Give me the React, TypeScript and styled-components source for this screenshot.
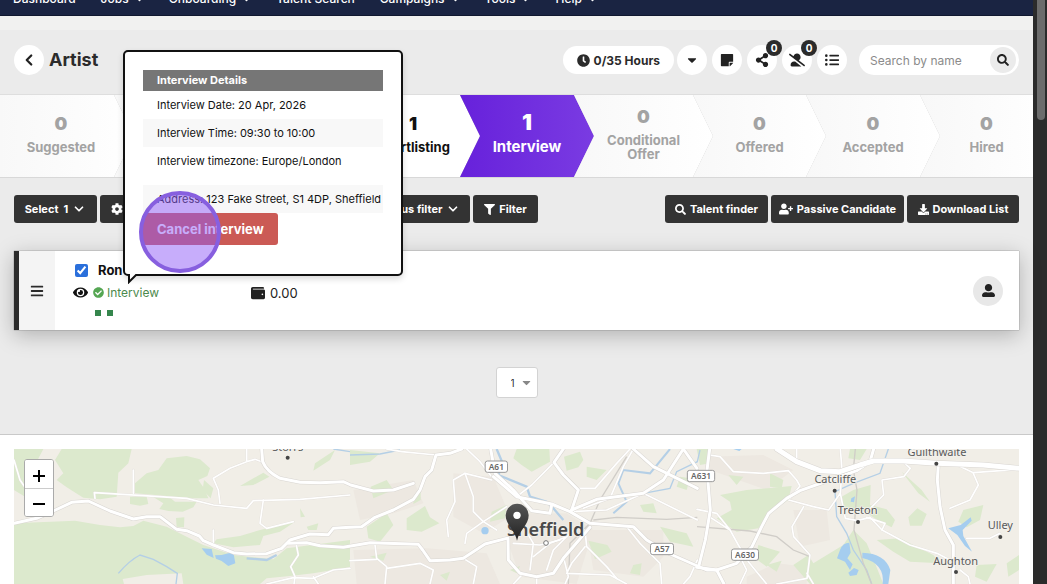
import React from "react";
import styled, { createGlobalStyle, css } from "styled-components";
import { ChevronDown, ChevronLeft } from "lucide-react";
import {
  FaBars,
  FaCaretDown,
  FaCheckCircle,
  FaClock,
  FaCog,
  FaDownload,
  FaEye,
  FaFilter,
  FaListUl,
  FaSearch,
  FaShareAlt,
  FaStickyNote,
  FaUserAlt,
  FaUserAltSlash,
  FaUserPlus,
  FaWallet,
} from "react-icons/fa";

const ink = "#2b2b2b";

const GlobalStyle = createGlobalStyle`
  *, *::before, *::after { box-sizing: border-box; }
  body {
    margin: 0;
    background: #fff;
    color: #111;
    font-family: Inter, "Liberation Sans", sans-serif;
    font-size: 11px;
    overflow: hidden;
  }
  button, input, select { font-family: inherit; }
  ul, ol, h1, h2 { margin: 0; padding: 0; list-style: none; }
`;

const Shell = styled.div`
  display: flex;
  min-height: 100vh;
`;

const Page = styled.div`
  position: relative;
  display: flex;
  flex: 1;
  flex-direction: column;
  min-width: 0;
`;

const ScrollTrack = styled.div`
  width: 14px;
  padding: 0 2px 0 4px;
  background: ${ink};
`;

const ScrollThumb = styled.div`
  height: 120px;
  border-radius: 0 0 4px 4px;
  background: #6c6c6c;
`;

const Nav = styled.nav`
  display: flex;
  align-items: flex-end;
  gap: 25px;
  height: 16px;
  padding: 0 13px 8px;
  overflow: hidden;
  background: #1a2442;
  border-bottom: 1px solid #10182f;
`;

const NavLink = styled.a`
  display: flex;
  align-items: center;
  gap: 6px;
  color: #fff;
  font-size: 12px;
  font-weight: 500;
  line-height: 16px;
  text-decoration: none;
  white-space: nowrap;
`;

const Strip = styled.div`
  height: 14px;
  background: #f1f1f0;
`;

const Grey = styled.div`
  background: #ebebeb;
  border-bottom: 1px solid #c9c9c9;
`;

const Header = styled.header`
  display: flex;
  align-items: center;
  gap: 5px;
  padding: 15px 14px 19px;
`;

const Title = styled.h1`
  flex: 1;
  color: ${ink};
  font-size: 18px;
  font-weight: 700;
  line-height: 30px;
`;

const RoundButton = styled.button`
  position: relative;
  display: grid;
  place-items: center;
  width: 30px;
  height: 30px;
  padding: 0;
  border: 0;
  border-radius: 50%;
  background: #fff;
  color: #222;
  font-size: 14px;
`;

const Badge = styled.span`
  position: absolute;
  top: -5px;
  right: -5px;
  width: 16px;
  border-radius: 8px;
  background: ${ink};
  color: #fff;
  font-size: 10px;
  font-weight: 700;
  line-height: 16px;
  text-align: center;
`;

const Hours = styled.div`
  display: flex;
  align-items: center;
  gap: 4px;
  height: 28px;
  margin-right: -2px;
  padding: 0 14px;
  border-radius: 14px;
  background: #fff;
  color: ${ink};
  font-size: 12px;
  font-weight: 700;
  white-space: nowrap;
`;

const Search = styled.form`
  display: flex;
  align-items: center;
  width: 160px;
  height: 30px;
  margin-left: 7px;
  padding: 0 3px 0 11px;
  border-radius: 15px;
  background: #fff;
`;

const SearchInput = styled.input`
  flex: 1;
  min-width: 0;
  padding: 0;
  border: 0;
  outline: 0;
  background: none;
  font-size: 12px;
  &::placeholder { color: #8b8b8b; }
`;

const SearchButton = styled.button`
  display: grid;
  place-items: center;
  width: 26px;
  height: 26px;
  padding: 0;
  border: 0;
  border-radius: 50%;
  background: #ebebeb;
  color: #222;
  font-size: 12px;
`;

const Pipeline = styled.ol`
  display: grid;
  grid-template-columns: 114fr 118fr 114fr 114fr 114fr 119fr 113fr 114fr 113fr;
  height: 84px;
  overflow: hidden;
  background: #c4c4c4;
  border-top: 1px solid #dedede;
  border-bottom: 1px solid #d8d8d8;
`;

type StageTone = "empty" | "filled" | "active";

const stageTones = {
  empty: css`
    color: #a3a3a3;
    background: linear-gradient(90deg, #f8f8f8, #fff);
  `,
  filled: css`
    color: #111;
    background: #fff;
  `,
  active: css`
    color: #fff;
    background: linear-gradient(90deg, #6721db, #7a3be2);
  `,
};

const Stage = styled.li<{ $tone: StageTone; $first: boolean }>`
  display: flex;
  flex-direction: column;
  align-items: center;
  justify-content: center;
  margin-right: -20px;
  padding: 0 ${(p) => (p.$first ? 32 : 20)}px 10px 20px;
  font-size: ${(p) => (p.$tone === "active" ? 15 : 13)}px;
  font-weight: 700;
  line-height: ${(p) => (p.$tone === "active" ? 18 : 14)}px;
  text-align: center;
  clip-path: polygon(
    0 0,
    calc(100% - 20px) 0,
    100% 50%,
    calc(100% - 20px) 100%,
    0 100%,
    ${(p) => (p.$first ? "0 50%" : "20px 50%")}
  );
  ${(p) => stageTones[p.$tone]}
  & + & { margin-left: ${(p) => (p.$tone === "empty" ? 1 : 0)}px; }
`;

const Count = styled.strong<{ $large: boolean }>`
  font-size: ${(p) => (p.$large ? 22 : 18)}px;
  line-height: 32px;
`;

const Toolbar = styled.div`
  display: flex;
  gap: 3px;
  padding: 17px 14px 28px;
`;

const ToolSpacer = styled.div`
  flex: 1;
`;

const ToolButton = styled.button<{ $width: number; $start?: boolean }>`
  display: flex;
  flex: 0 0 ${(p) => p.$width}px;
  align-items: center;
  justify-content: ${(p) => (p.$start ? "flex-start" : "center")};
  gap: 4px;
  min-width: 0;
  height: 28px;
  padding: 0 ${(p) => (p.$start ? 11 : 4)}px;
  border: 0;
  border-radius: 3px;
  background: #333;
  color: #fff;
  font-size: 11px;
  font-weight: 700;
  white-space: nowrap;
`;

const Card = styled.article`
  display: flex;
  height: 79px;
  margin: 0 14px;
  border-left: 5px solid ${ink};
  background: #fff;
  box-shadow: 0 0 1px rgba(0, 0, 0, 0.6), 0 5px 20px rgba(0, 0, 0, 0.25);
`;

const DragHandle = styled.button`
  display: grid;
  place-items: center;
  width: 36px;
  padding: 0;
  border: 0;
  background: #f4f4f4;
  color: ${ink};
  font-size: 14px;
`;

const Candidate = styled.div`
  display: flex;
  flex-direction: column;
  width: 196px;
  padding: 11px 0 0 18px;
`;

const NameRow = styled.label`
  display: flex;
  align-items: center;
  gap: 10px;
  height: 16px;
  font-size: 13px;
  font-weight: 700;
`;

const Tick = styled.input`
  width: 13px;
  height: 13px;
  margin: 0 0 0 2px;
  accent-color: #2a6fdb;
`;

const StatusRow = styled.div`
  display: flex;
  align-items: center;
  gap: 5px;
  height: 28px;
  color: #111;
  font-size: 15px;
`;

const StatusLink = styled.a`
  display: flex;
  align-items: center;
  gap: 3px;
  color: #4c8a4d;
  font-size: 12px;
  text-decoration: none;
  svg { color: #55a653; font-size: 11px; }
`;

const Marks = styled.div`
  display: flex;
  gap: 6px;
  padding: 4px 0 0 22px;
`;

const Mark = styled.span`
  width: 6px;
  height: 6px;
  background: #35864d;
`;

const Balance = styled.div`
  display: flex;
  flex: 1;
  align-items: center;
  gap: 5px;
  padding-top: 5px;
  color: #222;
  font-size: 13px;
`;

const Avatar = styled.button`
  display: grid;
  place-items: center;
  align-self: center;
  width: 30px;
  height: 30px;
  margin-right: 16px;
  padding: 0;
  border: 0;
  border-radius: 50%;
  background: #e8e8e8;
  color: #222;
  font-size: 13px;
`;

const Pager = styled.div`
  display: flex;
  justify-content: center;
  padding: 37px 0 36px;
`;

const PageSelect = styled.span`
  position: relative;
  svg {
    position: absolute;
    top: 9px;
    right: 5px;
    color: #888;
    font-size: 13px;
    pointer-events: none;
  }
  select {
    width: 42px;
    height: 31px;
    padding: 0 14px;
    appearance: none;
    border: 1px solid #d3d3d3;
    border-radius: 3px;
    background: #fff;
    color: #333;
    font-size: 10px;
  }
`;

const Popover = styled.section`
  position: absolute;
  top: 50px;
  left: 123px;
  width: 280px;
  height: 226px;
  padding: 18px;
  border: 2px solid #111;
  border-radius: 5px;
  background: #fff;
  box-shadow: 0 3px 6px rgba(0, 0, 0, 0.15);
`;

const Tail = styled.svg`
  position: absolute;
  left: 3px;
  bottom: -10px;
`;

const PopTitle = styled.h2`
  padding: 0 14px;
  background: #767676;
  color: #fff;
  font-size: 11px;
  font-weight: 700;
  line-height: 21px;
`;

const Detail = styled.li<{ $shaded?: boolean; $spaced?: boolean }>`
  margin-top: ${(p) => (p.$spaced ? 10 : 0)}px;
  padding: 0 14px;
  background: ${(p) => (p.$shaded ? "#f8f8f8" : "#fff")};
  color: #111;
  font-size: 11px;
  line-height: 28px;
  white-space: nowrap;
`;

const CancelButton = styled.button`
  height: 32px;
  padding: 0 14px;
  border: 0;
  border-radius: 3px;
  background: #cb5a55;
  color: #fff;
  font-size: 13px;
  font-weight: 700;
`;

const ClickHalo = styled.span`
  position: absolute;
  top: 139px;
  left: 14px;
  width: 82px;
  height: 82px;
  border: 4px solid #875fdf;
  border-radius: 50%;
  background: rgba(144, 92, 247, 0.5);
  pointer-events: none;
`;

const MapPanel = styled.section`
  position: relative;
  flex: 1;
  min-height: 135px;
  margin: 14px 14px 0;
  background: #f0ede6;
`;

const MapDrawing = styled.svg`
  position: absolute;
  inset: 0;
  width: 100%;
  height: 100%;
  font-family: "Noto Sans", sans-serif;
`;

const ZoomControl = styled.div`
  position: absolute;
  top: 10px;
  left: 10px;
  display: flex;
  flex-direction: column;
  width: 30px;
  border: 1px solid #aaa;
  border-radius: 3px;
  background: #fff;
  overflow: hidden;
`;

const ZoomButton = styled.button`
  display: grid;
  place-items: center;
  height: 28px;
  padding: 3px 0 0;
  border: 0;
  background: #fff;
  & + & { border-top: 1px solid #ccc; }
`;

const navItems = [
  { label: "Dashboard", menu: false },
  { label: "Jobs", menu: true },
  { label: "Onboarding", menu: true },
  { label: "Talent Search", menu: false },
  { label: "Campaigns", menu: true },
  { label: "Tools", menu: true },
  { label: "Help", menu: true },
];

const stages: { count?: number; label?: string; tone: StageTone }[] = [
  { count: 0, label: "Suggested", tone: "empty" },
  { tone: "empty" },
  { tone: "empty" },
  { count: 1, label: "Shortlisting", tone: "filled" },
  { count: 1, label: "Interview", tone: "active" },
  { count: 0, label: "Conditional Offer", tone: "empty" },
  { count: 0, label: "Offered", tone: "empty" },
  { count: 0, label: "Accepted", tone: "empty" },
  { count: 0, label: "Hired", tone: "empty" },
];

const woods = [
  "M42 57H130L110 95 100 170 75 200 42 180Z",
  "M185 57H395L385 100 355 128 350 200 300 208 250 203 200 172 170 150 190 130 165 90Z",
  "M405 160L440 130 475 120 500 85 560 78 600 88 630 115 622 138 595 150 612 175 625 205 560 205 500 198 405 190Z",
  "M612 150L640 175 632 205 608 180Z",
  "M390 200H440L445 222 420 227 390 222Z",
  "M455 198L510 203 525 215 590 215 580 232 548 245 505 243 478 237 490 220Z",
  "M528 264L553 262 552 292 530 290Z",
  "M42 280L225 272 300 285 360 292 400 288 430 272 500 290 560 320 610 345 700 375 820 388 860 355 1050 330V412L940 430 870 438 800 445 780 462H550L545 430 440 435 368 447 372 462H42Z",
  "M650 328L720 318 780 300 885 275 840 305 790 318 780 345 700 352 640 340Z",
  "M720 168L790 128 808 140 760 165Z M900 235L915 260 902 262Z M945 100L1005 60 990 90 940 122Z M920 290L955 280 950 300 925 300Z",
  "M1050 60L1140 70 1110 95 1050 105Z",
  "M1550 57H1648L1650 95 1595 125 1565 105 1540 85Z",
  "M1692 80L1740 65 1750 90 1735 112 1700 122Z",
  "M1220 265L1275 228 1290 262 1318 280 1265 305 1220 300Z",
  "M1100 290L1160 250 1180 285 1140 335 1105 325Z",
  "M1112 170L1160 150 1180 180 1120 205Z",
  "M1242 200L1262 182 1262 210 1240 222Z M1320 435L1350 425 1340 452Z M1110 380L1160 368 1150 392Z",
  "M1765 332L1822 345 1835 365 1785 388Z",
  "M1760 110L1820 120 1790 150 1760 140Z M1920 225L1960 220 1970 250 1930 245Z M1475 245L1520 225 1515 265 1470 275Z M1980 290L2060 310 2080 350 2010 335Z",
  "M1530 420L1560 408 1550 430Z M1900 405L1925 400 1920 435 1890 430Z M2040 140L2070 145 2060 180 2030 170Z",
  "M2150 265L2195 240 2190 215 2160 195 2240 180 2375 168 2365 210 2306 250 2275 295 2210 305Z",
  "M2090 57L2125 57 2130 100 2100 105Z M2185 135L2230 140 2210 165Z",
  "M2275 345L2340 365 2300 410 2265 385Z M2300 405L2345 392 2330 425Z",
  "M2430 462L2380 405 2425 375 2440 400 2530 345 2560 300 2600 340 2625 400 2650 462Z",
  "M2525 200L2560 180 2612 165 2610 225 2660 238 2685 270 2675 292 2640 275 2590 242 2525 240Z",
  "M2725 262L2752 235 2780 252 2765 287 2730 287Z",
  "M2890 240L2950 225 2940 270 2900 292 2875 275Z",
  "M2630 330L2700 325 2800 375 2820 400 2730 395 2680 365Z",
  "M3020 400L3057 375V420L3025 440Z M2705 125L2765 180 2790 215 2755 190Z M2550 57H2600L2580 90 2545 85Z",
  "M2930 405L2990 402 2960 455 2925 440Z M2310 130L2350 150 2345 175 2310 170Z",
];

const builtUp = [
  "M1060 180L1240 150 1270 220 1180 250 1080 270Z",
  "M1360 130L1480 140 1530 260 1450 310 1360 260Z",
  "M1060 360L1280 355 1460 370 1500 462 1070 462Z",
  "M1520 250L1700 250 1780 300 1730 462 1560 440 1525 340Z",
  "M1760 300L1990 300 1990 380 1930 440 1780 420Z",
  "M2120 80L2290 75 2380 120 2300 180 2130 120Z",
  "M2380 240L2480 240 2490 330 2400 350Z",
  "M2240 440L2330 400 2420 410 2420 462H2240Z",
];

const mainRoads = [
  "M42 280L110 265 160 243 215 217 265 213 330 243 400 267 440 260 480 260 530 298 560 302 598 318 610 332 640 345 700 368 740 372 800 371 845 355 870 330 930 312 985 314 1000 295 1050 292 1085 290 1125 262 1180 240 1240 208 1260 180 1275 140 1295 120 1308 75 1350 70 1385 57",
  "M865 340L920 338 960 347 1030 352 1110 338 1255 343 1268 360 1290 392 1350 390 1390 385 1455 342 1520 325",
  "M785 57L788 95Q800 125 840 145L900 157 960 158 1030 155 1052 165 1120 183 1180 180 1240 160",
  "M1472 57L1485 130 1540 180 1595 242 1650 250 1655 225",
  "M1690 57L1662 97 1690 135 1735 180 1715 240",
  "M1480 140L1550 200 1655 222 1710 245 1770 280 1900 290 1940 330 2010 372 2120 420 2150 420",
  "M1715 240L1790 208 1930 190 1990 150 2050 57",
  "M1524 325L1525 390 1560 430 1610 440 1660 430 1690 385 1770 292",
  "M2129 57L2121 120 2131 240 2116 330 2096 410",
  "M2621 57L2610 95 2570 122 2490 150 2400 182 2360 205 2306 250 2285 290 2256 350 2210 400 2150 420 2090 412",
  "M2150 420L2172 462",
  "M2815 105L2812 150 2820 230 2835 300 2860 345 2860 462",
  "M1900 57L1960 110 2092 175",
  "M2050 57L2091 115",
];

const sideRoads = [
  "M285 205L283 188 430 197 560 205 640 225 740 235 760 212 900 208 1050 195",
  "M42 90L60 150 75 172",
  "M660 220L655 180 640 145 690 115 740 95 740 57 M740 95L765 88 785 95",
  "M790 210L780 280 800 295 880 275",
  "M888 340L895 375 872 410 885 440 882 462",
  "M800 462L880 443 940 445 1000 420 1050 415",
  "M940 440L955 462 M640 300L640 345 M400 120L400 190",
  "M1160 57L1205 65 1308 75",
  "M1125 345L1130 385 1160 410 1155 462 M1050 392L1130 388 M1160 415L1260 400 1300 420 1290 462",
  "M1400 57L1440 95 1475 140 M1475 150L1395 130 1360 150 1365 215 1340 270 1345 320",
  "M1395 130L1420 200 1420 245 1450 275 1490 300 M1520 230L1450 275 1400 310 1395 340",
  "M1550 200L1595 165 1662 97 M1735 175L1785 175 1850 100 1890 57",
  "M1750 235L1830 205 1870 110 1900 57 M1710 245L1820 240 1930 190 2092 270",
  "M1690 380L1705 440 1695 462 M1755 350L1715 400 1700 430 1830 435 1880 462 M1570 430L1540 462",
  "M1755 300L1760 350 1820 410 1850 445 M1880 290L1920 340 1980 400 1985 462",
  "M2092 390L2070 440 2050 462 M1610 440L1610 462 M1600 380L1650 340 1700 320 M1640 420L1660 360 1720 300",
  "M1540 340L1620 345 1680 330 M1570 290L1600 340 1590 420 M1390 385L1430 410 1420 462",
  "M2129 75L2160 80 2200 125 2290 130 2365 122 2390 150 2400 168 2370 205",
  "M2091 238L2150 250 2190 300 2215 345 2245 395 2300 462 M2131 262L2190 300",
  "M2366 210L2440 230 2486 240 2521 190 2536 265 2571 272 2610 262 2646 300 2730 345 2811 370 2850 390",
  "M2521 57L2526 120 2521 190 M2390 57L2390 92",
  "M2411 230L2376 290 2381 320 2430 375 2421 445 2330 462 M2421 430L2440 462",
  "M2646 300L2655 280 2600 262 M2611 235L2651 195 2646 150 2711 140 2731 115 2711 97",
  "M2871 105L2920 128 3057 118 M2880 420L2905 440 2910 462 M2900 325H2970L3000 310",
  "M2920 130L2935 165 2910 210 2850 235 M2220 462L2240 420 2225 390",
];

const labels = [
  { x: 863, y: 62, text: "Storrs" },
  { x: 2811, y: 79, text: "Guilthwaite" },
  { x: 2506, y: 159, text: "Catcliffe" },
  { x: 2573, y: 253, text: "Treeton" },
  { x: 3001, y: 297, text: "Ulley" },
  { x: 2867, y: 404, text: "Aughton" },
];

const dots = [
  [863, 83],
  [2809, 101],
  [2504, 182],
  [2574, 276],
  [3001, 321],
  [2868, 426],
];

const shields = [
  { x: 1489, y: 110, w: 67, text: "A61" },
  { x: 2103, y: 138, w: 82, text: "A631" },
  { x: 1986, y: 357, w: 69, text: "A57" },
  { x: 2235, y: 374, w: 81, text: "A630" },
];

function CityMap() {
  return (
    <MapDrawing viewBox="42 57 3015 405" preserveAspectRatio="xMinYMin slice" role="img" aria-label="Map of Sheffield">
      <defs>
        <linearGradient id="pin" x1="0" y1="0" x2="0" y2="1">
          <stop offset="0" stopColor="#555" />
          <stop offset="1" stopColor="#222" />
        </linearGradient>
      </defs>
      <rect x="42" y="57" width="3015" height="405" fill="#f1eee7" />
      {builtUp.map((d) => <path key={d} d={d} fill="#ede8e1" />)}
      {woods.map((d) => <path key={d} d={d} fill="#dce9cd" />)}
      <g fill="none" stroke="#b4cfe6" strokeWidth="4">
        <path d="M355 430Q390 390 420 375L460 388 500 410 532 430 528 462" />
        <path d="M1490 57L1508 100 1495 135 1580 170 1590 200 1640 215 1660 235 1690 270" strokeWidth="7" />
        <path d="M1840 250L1880 215 1855 160 1870 120 1950 130 2010 57" strokeWidth="6" />
        <path d="M1930 190L2010 175 2030 125 2092 95 2100 60" />
        <path d="M1050 75L1140 72 1200 60 M1000 57L1050 65" />
        <path d="M2665 57L2640 130 2560 160 2505 185 2510 260 2540 310 2560 360 2600 420 2615 462" />
        <path d="M740 385L800 390 830 375" strokeWidth="7" />
      </g>
      <g fill="none" stroke="#d0cdc8" strokeWidth="4">
        <path d="M1780 270L1850 262 2000 268 2092 262" />
        <path d="M2091 290L2250 303 2330 320 2380 360 2430 380" />
        <path d="M2566 57L2560 120 2571 180 2562 300 2590 400 2615 462" />
        <path d="M1705 462L1710 340 1770 280 1800 210 1880 80" />
      </g>
      <g fill="#a5cdef">
        <path d="M605 355L635 357 641 384 620 374Z" />
        <path d="M645 376L665 375 700 366 706 400 685 408 665 393 648 386Z" />
        <circle cx="1455" cy="302" r="11" />
        <path d="M2520 360Q2528 338 2548 338L2552 368 2542 385 2558 403 2550 420 2535 395 2511 385Z" />
        <path d="M2545 428L2562 414 2576 420 2570 435 2550 438Z" />
        <path d="M2587 368Q2655 370 2671 420L2665 462H2648Q2655 400 2587 384Z" />
        <path d="M2845 295L2882 285 2912 262 2915 272 2888 300 2890 318 2916 365 2895 348 2872 315Z" />
        <path d="M2554 205L2565 199 2562 217 2552 215Z M2200 57H2225L2218 63Z" />
      </g>
      <g fill="none" strokeLinejoin="round" strokeLinecap="round">
        {sideRoads.map((d) => <path key={d} d={d} stroke="#e2deda" strokeWidth="7" />)}
        {sideRoads.map((d) => <path key={d + "t"} d={d} stroke="#fff" strokeWidth="5" />)}
        {mainRoads.map((d) => <path key={d} d={d} stroke="#d9d6d2" strokeWidth="12" />)}
        {mainRoads.map((d) => <path key={d + "t"} d={d} stroke="#fff" strokeWidth="9" />)}
        <path d="M2331 57L2390 95 2460 122 2520 125 2580 105 2620 93 2710 93 2810 100 2950 105 3060 115" stroke="#d9d6d2" strokeWidth="18" />
        <path d="M2331 57L2390 95 2460 122 2520 125 2580 105 2620 93 2710 93 2810 100 2950 105 3060 115" stroke="#fff" strokeWidth="15" />
      </g>
      {shields.map((s) => (
        <g key={s.text}>
          <rect x={s.x - s.w / 2} y={s.y - 17} width={s.w} height="34" rx="7" fill="#fff" stroke="#999" strokeWidth="3" />
          <text x={s.x} y={s.y + 9} fontSize="25" fontWeight="600" fill="#666" textAnchor="middle">{s.text}</text>
        </g>
      ))}
      <g stroke="#f3f1ec" strokeWidth="5" paintOrder="stroke" textAnchor="middle">
        {labels.map((l) => (
          <text key={l.text} x={l.x} y={l.y} fontSize="33" fill="#5a5a5a">{l.text}</text>
        ))}
        <text x="1637" y="318" fontSize="54" fontWeight="600" fill="#4a4a4a">Sheffield</text>
      </g>
      {dots.map(([x, y]) => <circle key={x} cx={x} cy={y} r="6" fill="#444" />)}
      <circle cx="1638" cy="339" r="7" fill="#fff" stroke="#777" strokeWidth="3" />
      <path d="M1551 332C1545 300 1517 285 1517 256A34 34 0 0 1 1586 256C1586 285 1558 300 1551 332Z" fill="url(#pin)" />
      <circle cx="1551" cy="256" r="11" fill="#fff" />
    </MapDrawing>
  );
}

export default function App() {
  return (
    <Shell>
      <GlobalStyle />
      <Page>
        <Nav>
          {navItems.map((item) => (
            <NavLink key={item.label} href="#">
              {item.label}
              {item.menu && <FaCaretDown size={9} />}
            </NavLink>
          ))}
        </Nav>
        <Strip />
        <Grey>
          <Header>
            <RoundButton aria-label="Back"><ChevronLeft size={18} strokeWidth={3} /></RoundButton>
            <Title>Artist</Title>
            <Hours><FaClock size={13} />0/35 Hours</Hours>
            <RoundButton aria-label="More"><FaCaretDown /></RoundButton>
            <RoundButton aria-label="Notes"><FaStickyNote /></RoundButton>
            <RoundButton aria-label="Share"><FaShareAlt /><Badge>0</Badge></RoundButton>
            <RoundButton aria-label="Hidden candidates"><FaUserAltSlash size={16} /><Badge>0</Badge></RoundButton>
            <RoundButton aria-label="List view"><FaListUl /></RoundButton>
            <Search>
              <SearchInput aria-label="Search by name" placeholder="Search by name" />
              <SearchButton type="button" aria-label="Search"><FaSearch /></SearchButton>
            </Search>
          </Header>

          <Pipeline>
            {stages.map((stage, i) => (
              <Stage key={i} $tone={stage.tone} $first={i === 0}>
                {stage.label && <Count $large={stage.tone === "active"}>{stage.count}</Count>}
                {stage.label}
              </Stage>
            ))}
          </Pipeline>

          <Toolbar>
            <ToolButton $width={83}>Select&nbsp; 1 <ChevronDown size={14} strokeWidth={3} /></ToolButton>
            <ToolButton $width={267} $start aria-label="Settings"><FaCog size={12} /></ToolButton>
            <ToolButton $width={100}>Status filter<ChevronDown size={14} strokeWidth={3} /></ToolButton>
            <ToolButton $width={65}><FaFilter size={11} />Filter</ToolButton>
            <ToolSpacer />
            <ToolButton $width={103}><FaSearch size={11} />Talent finder</ToolButton>
            <ToolButton $width={133}><FaUserPlus size={14} />Passive Candidate</ToolButton>
            <ToolButton $width={112}><FaDownload size={11} />Download List</ToolButton>
          </Toolbar>

          <Card>
            <DragHandle aria-label="Reorder"><FaBars /></DragHandle>
            <Candidate>
              <NameRow><Tick type="checkbox" defaultChecked />Ron</NameRow>
              <StatusRow>
                <FaEye />
                <StatusLink href="#"><FaCheckCircle />Interview</StatusLink>
              </StatusRow>
              <Marks><Mark /><Mark /></Marks>
            </Candidate>
            <Balance><FaWallet size={14} />0.00</Balance>
            <Avatar aria-label="Candidate profile"><FaUserAlt /></Avatar>
          </Card>

          <Pager>
            <PageSelect>
              <select aria-label="Page" defaultValue="1"><option>1</option></select>
              <FaCaretDown />
            </PageSelect>
          </Pager>
        </Grey>

        <MapPanel>
          <CityMap />
          <ZoomControl>
            <ZoomButton aria-label="Zoom in">
              <svg width="12" height="12" viewBox="0 0 12 12" stroke="#000" strokeWidth="2"><path d="M0 6H12M6 0V12" /></svg>
            </ZoomButton>
            <ZoomButton aria-label="Zoom out">
              <svg width="12" height="12" viewBox="0 0 12 12" stroke="#000" strokeWidth="2"><path d="M0 6H12" /></svg>
            </ZoomButton>
          </ZoomControl>
        </MapPanel>

        <Popover aria-label="Interview details">
          <PopTitle>Interview Details</PopTitle>
          <ul>
            <Detail>Interview Date: 20 Apr, 2026</Detail>
            <Detail $shaded>Interview Time: 09:30 to 10:00</Detail>
            <Detail>Interview timezone: Europe/London</Detail>
            <Detail $shaded $spaced>Address: 123 Fake Street, S1 4DP, Sheffield</Detail>
          </ul>
          <CancelButton>Cancel interview</CancelButton>
          <ClickHalo />
          <Tail width="10" height="11" viewBox="0 0 10 11">
            <path d="M0 0V2H1V9L8 2H10V0Z" fill="#fff" />
            <path d="M0 2H1V9L8 2H10" fill="none" stroke="#111" strokeWidth="2" />
          </Tail>
        </Popover>
      </Page>
      <ScrollTrack><ScrollThumb /></ScrollTrack>
    </Shell>
  );
}
